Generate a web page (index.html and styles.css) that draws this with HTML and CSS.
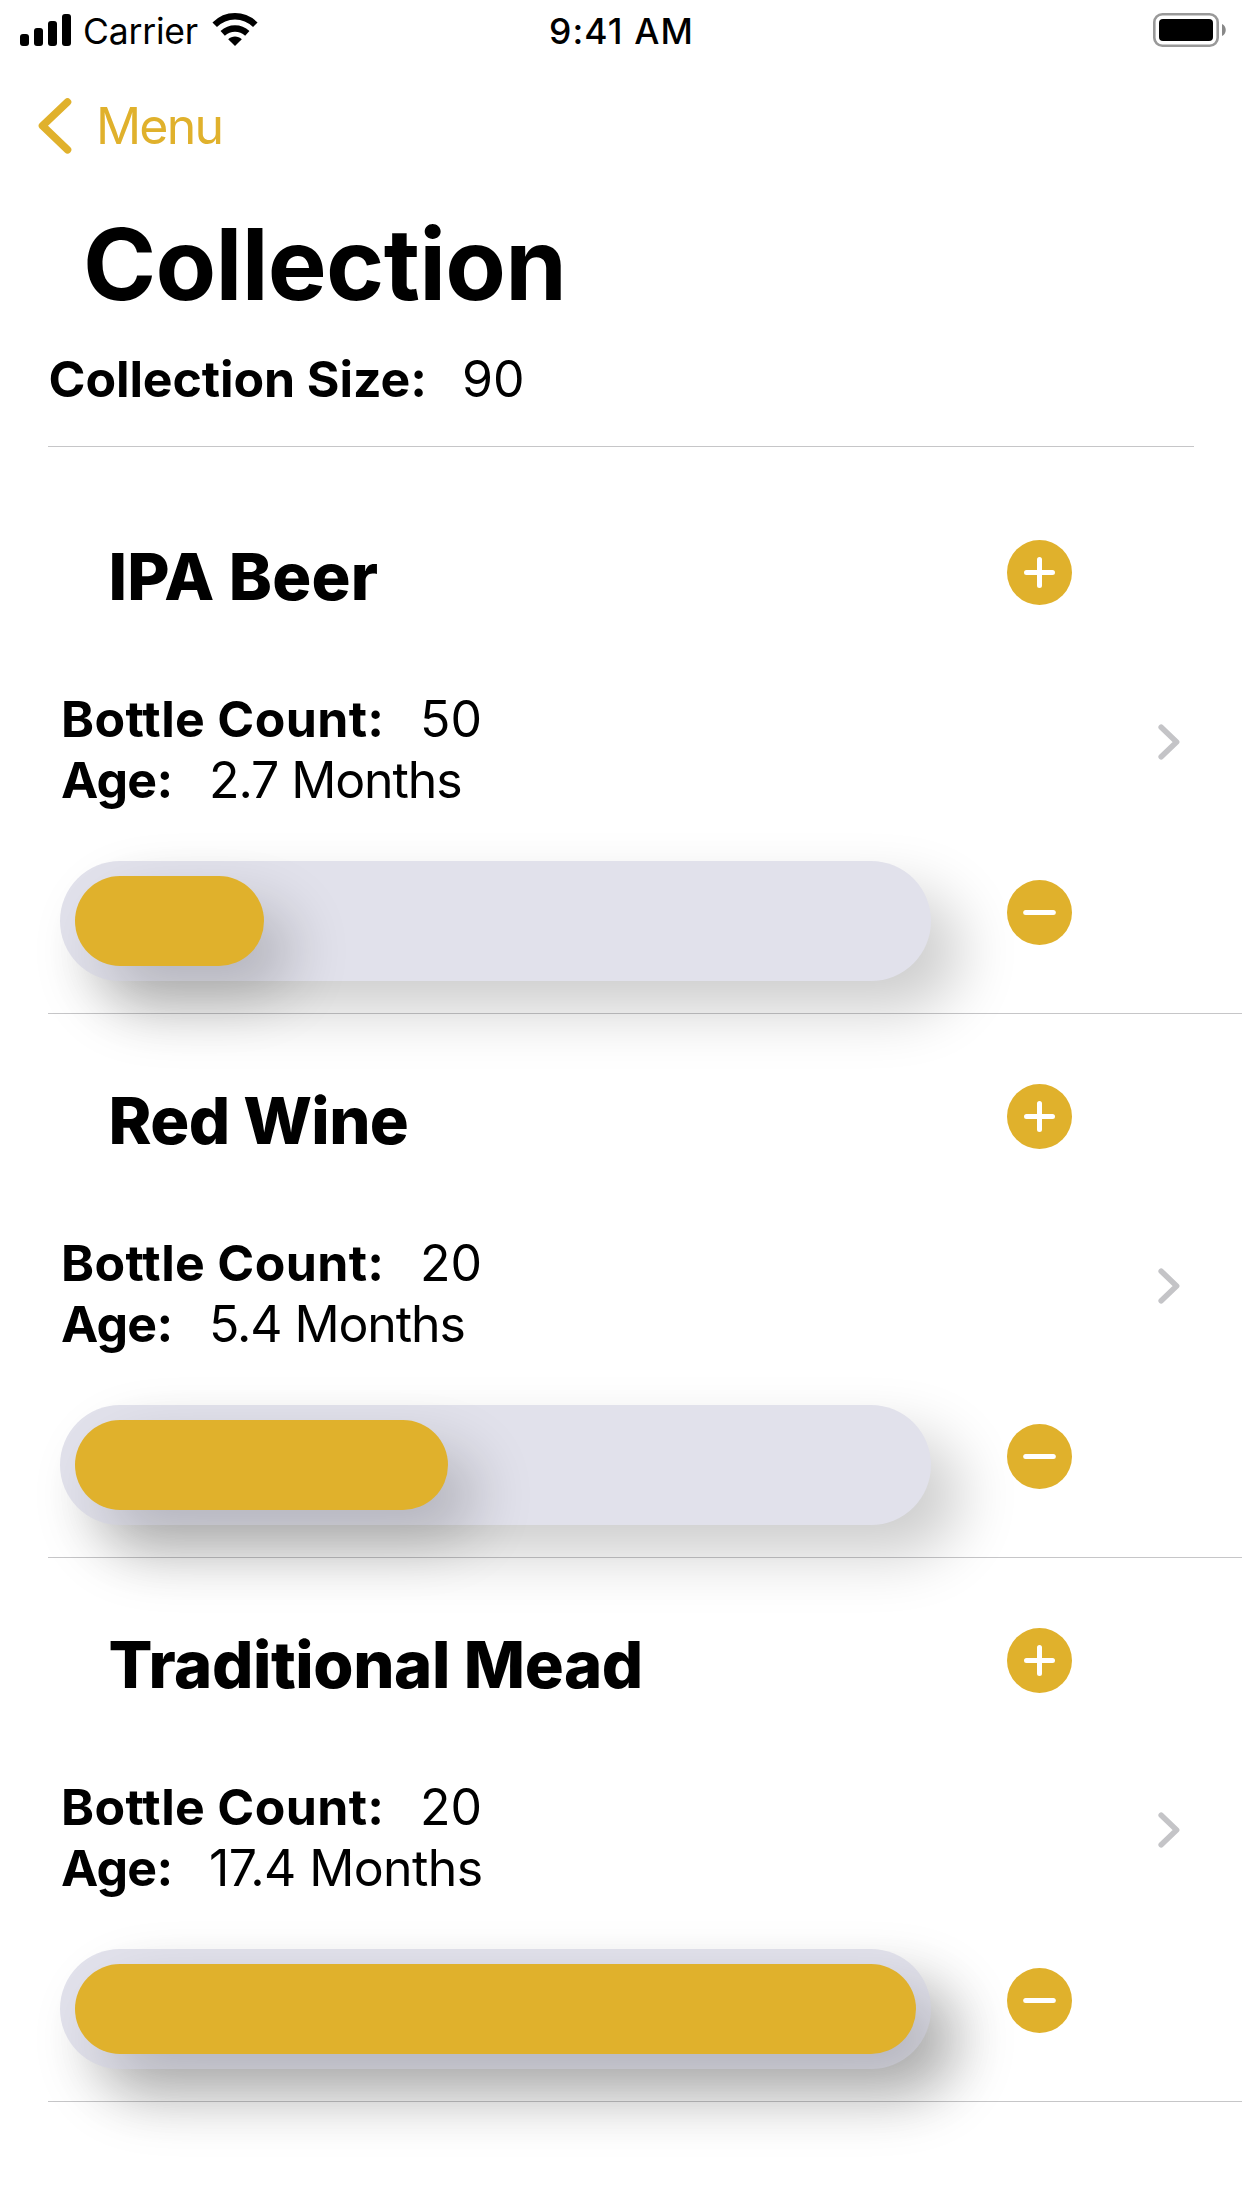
FILE: index.html
```html
<!DOCTYPE html>
<html lang="en">
<head>
<meta charset="utf-8">
<title>Collection</title>
<link rel="stylesheet" href="styles.css">
</head>
<body>
<svg width="0" height="0" class="defs" aria-hidden="true">
  <symbol id="plus" viewBox="0 0 65 65"><circle cx="32.5" cy="32.5" r="32.5" fill="#e0b12c"/><path d="M19.5 32.5h26M32.5 19.5v26" stroke="#fff" stroke-width="5" stroke-linecap="round"/></symbol>
  <symbol id="minus" viewBox="0 0 65 65"><circle cx="32.5" cy="32.5" r="32.5" fill="#e0b12c"/><path d="M18.7 32.5h27.6" stroke="#fff" stroke-width="5" stroke-linecap="round"/></symbol>
  <symbol id="next" viewBox="0 0 22 36"><path d="M3.2 3.2L18.6 18L3.2 32.8" fill="none" stroke="#c4c4c7" stroke-width="5.6" stroke-linecap="round" stroke-linejoin="round"/></symbol>
</svg>
<header class="status">
  <div class="status-left">
    <svg class="signal" width="51" height="32" viewBox="0 0 51 32"><rect y="20" width="9" height="12" rx="3"/><rect x="14" y="14" width="9" height="18" rx="3"/><rect x="28" y="7" width="9" height="25" rx="3"/><rect x="42" width="9" height="32" rx="3"/></svg>
    <span class="carrier">Carrier</span>
    <svg class="wifi" width="46" height="33" viewBox="0 0 46 33"><path d="M2.7 11.8C14.2 .4 31.8 .4 43.3 11.8M10.7 20.3C17.8 13.9 28.2 13.9 35.3 20.3" fill="none" stroke="#000" stroke-width="6.4"/><path d="M23 33L16.2 26.3C20 22.6 26 22.6 29.8 26.3Z"/></svg>
  </div>
  <span class="time">9:41 AM</span>
  <div class="status-right">
    <svg width="74" height="34" viewBox="0 0 74 34"><rect x="1.3" y="1.3" width="63.4" height="31.4" rx="8" fill="none" stroke="#999" stroke-width="2.6"/><rect x="6" y="6" width="54" height="22" rx="4"/><path d="M69 11C74 13 74 21 69 23Z" fill="#888"/></svg>
  </div>
</header>
<nav class="nav">
  <svg width="35" height="58" viewBox="0 0 35 58"><path d="M29.5 5L4.5 28.8L29.5 52.8" fill="none" stroke="#e0b12c" stroke-width="7.6" stroke-linecap="round" stroke-linejoin="round"/></svg>
  <span class="back">Menu</span>
</nav>
<h1 class="title">Collection</h1>
<section class="summary"><b class="size-label">Collection Size:</b><span class="size">90</span></section>
<main class="list">
  <article class="row">
    <div class="info">
      <h2 class="name ipa">IPA Beer</h2>
      <p class="line"><b class="count">Bottle Count:</b><span class="num">50</span></p>
      <p class="line"><b class="age">Age:</b><span class="months">2.7 Months</span></p>
      <div class="track"><div class="fill" style="width:189px"></div></div>
    </div>
    <div class="actions"><svg><use href="#plus"/></svg><svg><use href="#minus"/></svg></div>
    <svg class="next"><use href="#next"/></svg>
  </article>
  <article class="row">
    <div class="info">
      <h2 class="name wine">Red Wine</h2>
      <p class="line"><b class="count">Bottle Count:</b><span class="num">20</span></p>
      <p class="line"><b class="age">Age:</b><span class="months">5.4 Months</span></p>
      <div class="track"><div class="fill" style="width:373px"></div></div>
    </div>
    <div class="actions"><svg><use href="#plus"/></svg><svg><use href="#minus"/></svg></div>
    <svg class="next"><use href="#next"/></svg>
  </article>
  <article class="row">
    <div class="info">
      <h2 class="name mead">Traditional Mead</h2>
      <p class="line"><b class="count">Bottle Count:</b><span class="num">20</span></p>
      <p class="line"><b class="age">Age:</b><span class="months long">17.4 Months</span></p>
      <div class="track"><div class="fill" style="width:841px"></div></div>
    </div>
    <div class="actions"><svg><use href="#plus"/></svg><svg><use href="#minus"/></svg></div>
    <svg class="next"><use href="#next"/></svg>
  </article>
</main>
</body>
</html>
```
FILE: styles.css
```css
* { box-sizing: border-box; margin: 0; padding: 0; }
body { width: 1242px; height: 2208px; overflow: hidden; background: #fff; color: #000; font-family: Inter, "Liberation Sans", sans-serif; font-size: 50px; line-height: 61px; white-space: nowrap; }
svg { display: block; flex: none; }
.defs { position: absolute; }
b { flex: none; font-weight: 700; }

.status { display: grid; grid-template-columns: 1fr auto 1fr; height: 60px; padding: 0 15px 0 20px; font-size: 35.5px; line-height: 64px; }
.status-left { display: flex; align-items: flex-start; }
.signal { margin-top: 14px; }
.carrier { width: 141px; padding-left: 12px; letter-spacing: -0.2px; }
.wifi { margin-top: 13px; }
.time { padding-right: 4px; font-weight: 500; letter-spacing: 1.1px; }
.status-right { display: flex; justify-content: flex-end; padding-top: 13px; }

.nav { display: flex; align-items: center; height: 132px; padding: 0 38px; color: #e0b12c; }
.back { padding-left: 23px; letter-spacing: -1.8px; }

.title { height: 140px; padding: 12px 0 0 83px; font-size: 99px; font-weight: 700; line-height: 120px; letter-spacing: -0.7px; }
.summary { display: flex; height: 115px; margin: 0 48px; padding-top: 17px; border-bottom: 1px solid #c6c6c8; }
.size-label { width: 414px; padding-left: 0.5px; letter-spacing: -0.1px; }

.list { padding: 23px 0 0 48px; }
.row { display: flex; height: 544px; border-bottom: 1px solid rgba(60, 60, 67, 0.29); }
.info { width: 959px; padding: 67px 0 0 12px; }
.name { height: 152px; padding-left: 48.5px; font-size: 65px; font-weight: 800; line-height: 80px; letter-spacing: -0.6px; }
.ipa { letter-spacing: 0.2px; }
.mead { letter-spacing: -0.4px; }
.line { display: flex; }
.count { width: 360px; padding-left: 1px; letter-spacing: 0.35px; }
.age { width: 149px; padding-left: 1px; letter-spacing: -0.7px; }
.months { letter-spacing: -1.1px; }
.long { letter-spacing: -0.6px; }
.track { width: 871px; height: 120px; margin-top: 50px; padding: 15px; border-radius: 60px; background: #e1e1eb; box-shadow: 30px 30px 60px rgba(0, 0, 0, 0.2); }
.fill { height: 90px; border-radius: 45px; background: #e0b12c; box-shadow: 30px 30px 60px rgba(0, 0, 0, 0.2); }
.actions { display: flex; flex-direction: column; justify-content: space-between; width: 65px; padding: 70px 0 68px; }
.actions svg { width: 65px; height: 65px; }
.next { align-self: center; width: 22px; height: 36px; margin-left: 85.5px; }
```
